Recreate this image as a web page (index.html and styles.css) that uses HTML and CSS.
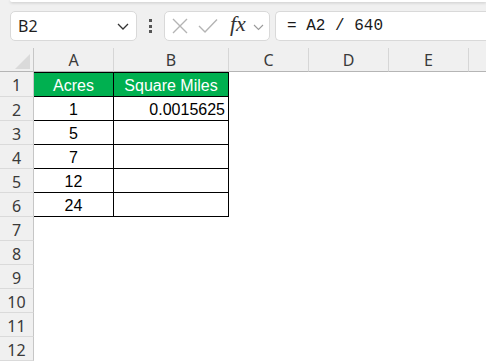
FILE: index.html
```html
<!DOCTYPE html>
<html>
<head>
<meta charset="utf-8">
<link rel="stylesheet" href="styles.css">
</head>
<body>
<div class="app">
  <div class="ribbon-edge"></div>
  <div class="fbar">
    <div class="namebox">
      <span class="name">B2</span>
      <svg class="chev" width="12" height="7" viewBox="0 0 12 7"><path d="M1 1 L6 6 L11 1" fill="none" stroke="#333" stroke-width="1.3"/></svg>
    </div>
    <div class="dots"><i></i><i></i><i></i></div>
    <div class="fbtns">
      <svg class="btn-x" width="16" height="16" viewBox="0 0 16 16"><path d="M1 1 L15 15 M15 1 L1 15" stroke="#b4b4b4" stroke-width="1.4" fill="none"/></svg>
      <svg class="btn-ok" width="20" height="16" viewBox="0 0 20 16"><path d="M1 8 L7 14 L19 1.5" stroke="#b4b4b4" stroke-width="1.4" fill="none"/></svg>
      <span class="fx">fx</span>
      <svg class="chev2" width="11" height="7" viewBox="0 0 11 7"><path d="M1 1 L5.5 5.5 L10 1" fill="none" stroke="#9a9a9a" stroke-width="1.1"/></svg>
    </div>
    <div class="finput">= A2 / 640</div>
  </div>
  <div class="sheet">
    <div class="corner"><span class="tri"></span></div>
    <div class="ch">A</div><div class="ch">B</div><div class="ch">C</div><div class="ch">D</div><div class="ch">E</div><div class="ch last"></div>

    <div class="rh r1">1</div>
    <div class="c r1 hd">Acres</div><div class="c r1 hd">Square Miles</div><div class="e r1"></div><div class="e r1"></div><div class="e r1"></div><div class="e r1"></div>

    <div class="rh">2</div>
    <div class="c ctr">1</div><div class="c num">0.0015625</div><div class="e"></div><div class="e"></div><div class="e"></div><div class="e"></div>

    <div class="rh">3</div>
    <div class="c ctr">5</div><div class="c"></div><div class="e"></div><div class="e"></div><div class="e"></div><div class="e"></div>

    <div class="rh">4</div>
    <div class="c ctr">7</div><div class="c"></div><div class="e"></div><div class="e"></div><div class="e"></div><div class="e"></div>

    <div class="rh">5</div>
    <div class="c ctr">12</div><div class="c"></div><div class="e"></div><div class="e"></div><div class="e"></div><div class="e"></div>

    <div class="rh">6</div>
    <div class="c ctr">24</div><div class="c"></div><div class="e"></div><div class="e"></div><div class="e"></div><div class="e"></div>

    <div class="rh">7</div><div class="e span"></div>
    <div class="rh">8</div><div class="e span"></div>
    <div class="rh">9</div><div class="e span"></div>
    <div class="rh">10</div><div class="e span"></div>
    <div class="rh">11</div><div class="e span"></div>
    <div class="rh">12</div><div class="e span"></div>
  </div>
</div>
</body>
</html>
```

FILE: styles.css
```css
* { box-sizing: border-box; }
html, body { margin: 0; padding: 0; }
body {
  width: 486px;
  height: 361px;
  overflow: hidden;
  background: #f0f0f0;
  font-family: "Noto Sans", "Liberation Sans", sans-serif;
}
.app {
  display: flex;
  flex-direction: column;
  height: 361px;
}
.ribbon-edge {
  height: 4px;
  margin-left: 10px;
  background: #ffffff;
  border-radius: 0 0 0 6px;
  box-shadow: 0 1px 3px rgba(0, 0, 0, 0.18);
}
.fbar {
  display: flex;
  align-items: center;
  margin-top: 9px;
  height: 30px;
  padding-left: 10px;
}
.namebox {
  width: 127px;
  height: 30px;
  background: #fff;
  border: 1px solid #d9d9d9;
  border-radius: 5px;
  display: flex;
  align-items: center;
  justify-content: space-between;
  padding: 0 7px 0 7px;
}
.name {
  font-size: 16px;
  color: #1f1f1f;
}
.chev { margin-top: 1px; }
.dots {
  width: 27px;
  display: flex;
  flex-direction: column;
  align-items: center;
  gap: 2.5px;
}
.dots i {
  display: block;
  width: 3px;
  height: 3px;
  background: #555;
}
.fbtns {
  width: 106px;
  height: 30px;
  background: #fff;
  border: 1px solid #d9d9d9;
  border-radius: 5px;
  display: flex;
  align-items: center;
  padding-left: 7px;
}
.btn-x { margin-right: 10px; }
.btn-ok { margin-right: 12px; }
.fx {
  font-family: "Liberation Serif", serif;
  font-style: italic;
  font-size: 22px;
  color: #333;
  margin-right: 7px;
  margin-top: -4px;
}
.chev2 { margin-top: 2px; }
.finput {
  margin-left: 5px;
  flex: 1;
  height: 30px;
  background: #fff;
  border: 1px solid #d9d9d9;
  border-right: none;
  border-radius: 5px 0 0 5px;
  display: flex;
  align-items: center;
  padding-left: 11px;
  font-family: "Liberation Mono", monospace;
  font-size: 16px;
  color: #1a1a1a;
  white-space: pre;
}
.sheet {
  margin-top: 7px;
  display: grid;
  grid-template-columns: 34px 80px 115px 80px 80px 80px 1fr;
  grid-template-rows: 24px 25px repeat(11, 24px);
  background: #fff;
}
.corner {
  background: #f0f0f0;
  border-right: 1px solid #c6c6c6;
  border-bottom: 1px solid #b5b5b5;
  position: relative;
}
.tri {
  position: absolute;
  right: 3px;
  bottom: 2px;
  width: 15px;
  height: 15px;
  background: #dadada;
  clip-path: polygon(100% 0, 100% 100%, 0 100%);
}
.ch {
  background: #f0f0f0;
  border-right: 1px solid #d6d6d6;
  border-bottom: 1px solid #b5b5b5;
  display: flex;
  align-items: center;
  justify-content: center;
  font-size: 16px;
  color: #3a3a3a;
  padding-top: 1px;
}
.ch.last { border-right: none; }
.rh {
  background: #f0f0f0;
  border-right: 1px solid #c6c6c6;
  border-bottom: 1px solid #dadada;
  display: flex;
  align-items: center;
  justify-content: center;
  font-size: 16px;
  color: #3a3a3a;
  padding-top: 2px;
}
.c {
  border-right: 1px solid #000;
  border-bottom: 1px solid #000;
  display: flex;
  align-items: center;
  font-family: "Liberation Sans", Arial, sans-serif;
  font-size: 16px;
  color: #000;
  padding-top: 3px;
}
.c.r1 { border-top: 1px solid #000; }
.hd {
  background: #00b050;
  color: #fff;
  justify-content: center;
}
.ctr { justify-content: center; }
.num { justify-content: flex-end; padding-right: 3px; }
.e { background: #fff; }
.span { grid-column: 2 / 8; }
```
